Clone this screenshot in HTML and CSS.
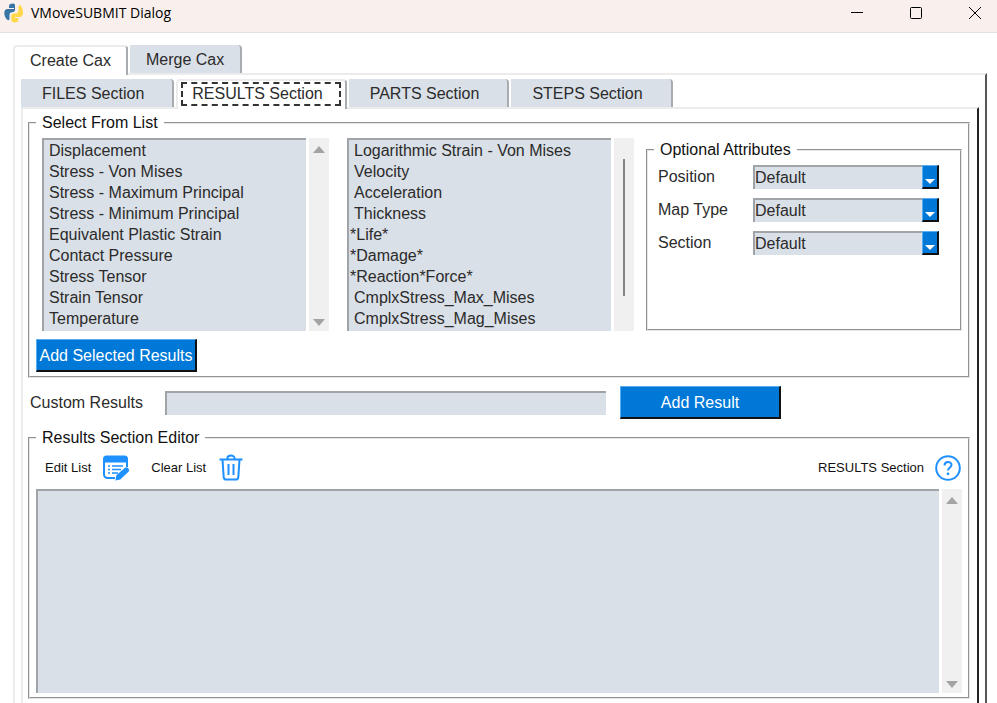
FILE: index.html
```html
<!DOCTYPE html>
<html lang="en">
<head>
<meta charset="utf-8">
<title>VMoveSUBMIT Dialog</title>
<link rel="stylesheet" href="styles.css">
</head>
<body>
<header class="titlebar">
  <svg class="logo" width="20" height="20" viewBox="0 0 20 20" aria-hidden="true">
    <path fill="#3874a6" d="M9 .5C6 .5 5 1.500 5 3.300V5h5v1H3.500C1.300 6 .3 7.800.3 10s1 5 2.700 6.500q2 1.500 2.500-.5V12c0-1.800 1-2.800 2.500-2.800q3 0 3-2.400V3.300C11 1.500 11 .5 9 .5z"/>
    <path fill="#ffd84a" d="M14.500 2.500v4.700c0 1.900-1.300 3.200-3 3.200H9.700c-1.500 0-2.400 1-2.400 2.400v3.700c0 1.900 1.200 3 3.400 3s3.700-1 3.700-2.900V15h-3.500v-1h4.800c2.300 0 3.300-1.800 3.300-4.500s-1-6-2.500-7q-1.500-1-2 0z"/>
  </svg>
  <h1 class="title">VMoveSUBMIT Dialog</h1>
  <div class="window-buttons">
    <button type="button" aria-label="Minimize"><svg width="12" height="12" viewBox="0 0 12 12"><path d="M0 5.500h12"/></svg></button>
    <button type="button" aria-label="Maximize"><svg width="12" height="12" viewBox="0 0 12 12"><rect x=".5" y=".5" width="11" height="11" rx="1"/></svg></button>
    <button type="button" aria-label="Close"><svg width="12" height="12" viewBox="0 0 12 12"><path d="M0 0l12 12M12 0L0 12"/></svg></button>
  </div>
</header>

<main class="notebook outer">
  <div class="tabs" role="tablist">
    <button class="tab active" type="button" role="tab" aria-selected="true">Create Cax</button>
    <button class="tab" type="button" role="tab" aria-selected="false">Merge Cax</button>
  </div>
  <div class="panel">
    <div class="notebook inner">
      <div class="tabs" role="tablist">
        <button class="tab" type="button" role="tab" aria-selected="false">FILES Section</button>
        <button class="tab active" type="button" role="tab" aria-selected="true"><span class="focus">RESULTS Section</span></button>
        <button class="tab" type="button" role="tab" aria-selected="false">PARTS Section</button>
        <button class="tab" type="button" role="tab" aria-selected="false">STEPS Section</button>
      </div>
      <form class="panel">
        <fieldset class="group">
          <legend>Select From List</legend>
          <div class="lists">
            <div class="scroll-area first">
              <select class="listbox" multiple size="9" aria-label="Standard results">
                <option>Displacement</option>
                <option>Stress - Von Mises</option>
                <option>Stress - Maximum Principal</option>
                <option>Stress - Minimum Principal</option>
                <option>Equivalent Plastic Strain</option>
                <option>Contact Pressure</option>
                <option>Stress Tensor</option>
                <option>Strain Tensor</option>
                <option>Temperature</option>
              </select>
              <div class="scrollbar"><span class="arrow up"></span><span class="arrow down"></span></div>
            </div>
            <div class="scroll-area">
              <select class="listbox" multiple size="9" aria-label="Other results">
                <option>Logarithmic Strain - Von Mises</option>
                <option>Velocity</option>
                <option>Acceleration</option>
                <option>Thickness</option>
                <option class="pattern">*Life*</option>
                <option class="pattern">*Damage*</option>
                <option class="pattern">*Reaction*Force*</option>
                <option>CmplxStress_Max_Mises</option>
                <option>CmplxStress_Mag_Mises</option>
              </select>
              <div class="scrollbar slim"><span class="thumb"></span></div>
            </div>
            <fieldset class="group attributes">
              <legend>Optional Attributes</legend>
              <div class="attribute-grid">
                <label for="position">Position</label>
                <div class="combo"><select id="position"><option>Default</option></select><span class="drop"></span></div>
                <label for="map-type">Map Type</label>
                <div class="combo"><select id="map-type"><option>Default</option></select><span class="drop"></span></div>
                <label for="section">Section</label>
                <div class="combo"><select id="section"><option>Default</option></select><span class="drop"></span></div>
              </div>
            </fieldset>
          </div>
          <button class="action" type="button">Add Selected Results</button>
        </fieldset>

        <div class="custom-row">
          <label for="custom">Custom Results</label>
          <input id="custom" type="text">
          <button class="action" type="button">Add Result</button>
        </div>

        <fieldset class="group editor">
          <legend>Results Section Editor</legend>
          <div class="editor-body">
            <div class="toolbar">
              <span id="edit-label">Edit List</span>
              <button class="icon" type="button" aria-labelledby="edit-label">
                <svg width="28" height="28" viewBox="0 0 28 28" fill="none" stroke="#1e90ff" stroke-width="2">
                  <path d="M2 8v12.500a3.500 3.500 0 0 0 3.500 3.500H13M25 8v5"/>
                  <path fill="#1e90ff" stroke="none" d="M1 8.500V5a3.500 3.500 0 0 1 3.500-3.500h18A3.500 3.500 0 0 1 26 5v3.500z"/>
                  <path stroke-width="1.500" d="M6 12h2M10 12h11M6 15.500h2M10 15.500h9M6 19h2M10 19h6"/>
                  <path fill="#1e90ff" stroke="none" d="M13.500 26.500l.8-5.300 8.700-7.400q1.500-1.200 2.900.2l.8.9q1.200 1.500-.2 2.800l-8.200 7.700z"/>
                </svg>
              </button>
              <span id="clear-label">Clear List</span>
              <button class="icon" type="button" aria-labelledby="clear-label">
                <svg width="28" height="28" viewBox="-2 0 28 28" fill="none" stroke="#1e90ff" stroke-width="2">
                  <path d="M.5 5.500h23M8.500 5.500V4a3.500 2.500 0 0 1 7 0v1.500M3.500 5.500l1.200 17.800a2.500 2.500 0 0 0 2.500 2.200h9.600a2.500 2.500 0 0 0 2.500-2.200l1.200-17.800M9.500 10v11M14.500 10v11"/>
                </svg>
              </button>
              <span class="help-label" id="help-label">RESULTS Section</span>
              <button class="icon" type="button" aria-labelledby="help-label">
                <svg width="26" height="26" viewBox="0 0 26 26" fill="none" stroke="#1e90ff" stroke-width="2">
                  <circle cx="13" cy="13" r="11.800"/>
                  <path d="M9.500 10.500c0-4.500 7-4.500 7-.5 0 2.500-3.500 2.600-3.500 5.500"/>
                  <circle cx="13" cy="18.800" r="1.400" fill="#1e90ff" stroke="none"/>
                </svg>
              </button>
            </div>
            <div class="scroll-area grow">
              <textarea aria-label="Results section text"></textarea>
              <div class="scrollbar"><span class="arrow up"></span><span class="arrow down"></span></div>
            </div>
          </div>
        </fieldset>
      </form>
    </div>
  </div>
</main>
</body>
</html>
```
FILE: styles.css
```css
* { box-sizing: border-box; }

body {
  margin: 0;
  height: 100vh;
  display: flex;
  flex-direction: column;
  overflow: hidden;
  background: #fff;
  color: #2b2b2b;
  font: 16px/20px "Liberation Sans", Arial, sans-serif;
}

button, input, select, textarea {
  font: inherit;
  color: inherit;
  margin: 0;
  padding: 0;
  border: 0;
  border-radius: 0;
  outline: 0;
}

/* Window title bar */
.titlebar {
  display: flex;
  align-items: center;
  height: 33px;
  padding: 0 10px 7px 4px;
  background: #f9f0ed;
  border-bottom: 1px solid #e2e2e2;
}
.title {
  margin: 0 0 0 7px;
  color: #000;
  font: 14px/20px "Open Sans", "Noto Sans", sans-serif;
}
.window-buttons { display: flex; gap: 35px; margin-left: auto; }
.window-buttons button {
  display: grid;
  place-items: center;
  width: 24px;
  height: 24px;
  background: none;
}
.window-buttons svg { fill: none; stroke: #000; overflow: visible; }

/* Notebooks */
.notebook { display: flex; flex-direction: column; flex: 1; min-height: 0; }
.outer { margin: 12px 10px 0 13px; }
.panel {
  display: flex;
  flex-direction: column;
  flex: 1;
  min-height: 0;
  border-top: 2px solid #ececec;
  border-left: 2px solid #ececec;
  border-right: 2px solid #555;
}
.outer > .panel { padding: 4px 6px 0; }
.inner > .panel { padding: 4px 7px 4px 5px; border-right-color: #222; }

.tabs { display: flex; align-items: flex-end; gap: 2px; }
.tab {
  height: 28px;
  padding: 2px 28px 0 21px;
  background: #dae0e7;
  border-right: 2px solid #a8abaf;
  border-radius: 0 4px 0 0;
}
.tab.active {
  position: relative;
  height: 30px;
  margin-bottom: -2px;
  background: #fff;
  border-top: 2px solid #ececec;
  border-left: 2px solid #ececec;
  border-radius: 4px 4px 0 0;
}
.outer > .tabs .tab { padding: 2px 16px 0; }
.outer > .tabs .tab.active { padding: 0 15px; }
.inner > .tabs .tab.active { padding: 0 4px 2px 3px; }
.focus {
  display: block;
  padding: 0 16px 0 9px;
  border: 2px dashed #333;
}

/* Titled frames */
.group {
  min-width: 0;
  margin: 0;
  padding: 5px 6px 4px;
  border: 2px groove #e6e6e6;
}
.group > legend { margin-left: 0; padding: 0 6px; color: #111; }
.attributes > legend { line-height: 18px; }

.lists {
  display: grid;
  grid-template-columns: 293fr 287fr 316fr;
  column-gap: 12px;
  margin: 0 0 8px 6px;
}
.scroll-area { display: flex; gap: 3px; min-width: 0; }
.first { margin-right: 6px; }
.listbox {
  flex: 1;
  min-width: 0;
  height: 193px;
  padding-top: 2px;
  overflow: hidden;
  background: #dae0e7;
  border-top: 2px solid #a0a4a8;
  border-left: 2px solid #a0a4a8;
}
.listbox option {
  min-height: 21px;
  padding: 0 5px;
  line-height: 21px;
}
.listbox .pattern { padding-left: 1px; }

.scrollbar {
  display: flex;
  flex-direction: column;
  justify-content: space-between;
  align-items: center;
  width: 20px;
  padding: 8px 0 5px;
  background: #f0f0f0;
}
.arrow { border: 6px solid transparent; }
.arrow.up { border-top: 0; border-bottom: 7px solid #a3a3a3; }
.arrow.down { border-bottom: 0; border-top: 7px solid #a3a3a3; }
.slim { padding: 21px 0 35px; }
.thumb { flex: 1; width: 2px; background: #858585; }

.attributes { margin-top: 3px; padding: 6px 21px 8px 10px; }
.attributes > legend { margin-left: -4px; }
.attribute-grid {
  display: grid;
  grid-template-columns: 86px 1fr;
  align-items: center;
  gap: 9px;
}
.combo { display: flex; height: 24px; }
.combo select {
  flex: 1;
  min-width: 0;
  appearance: none;
  background: #dae0e7;
  border-top: 2px solid #a0a4a8;
  border-left: 2px solid #a0a4a8;
}
.drop {
  display: flex;
  justify-content: center;
  align-items: flex-end;
  width: 17px;
  padding-bottom: 3px;
  background: #0078d7;
  border: 1px solid #5aacf0;
  border-right: 2px solid #111;
  border-bottom: 2px solid #111;
}
.drop::before {
  content: "";
  border: 5px solid transparent;
  border-top-color: #fff;
  border-bottom: 0;
}

.action {
  display: block;
  width: 161px;
  height: 33px;
  padding-top: 2px;
  white-space: nowrap;
  color: #fff;
  background: #0078d7;
  border: 1px solid #5aacf0;
  border-right: 2px solid #111;
  border-bottom: 2px solid #111;
}

.custom-row {
  display: flex;
  align-items: center;
  margin: 8px 189px 9px 2px;
}
.custom-row label { width: 135px; }
.custom-row input {
  flex: 1;
  min-width: 0;
  height: 24px;
  margin-right: 14px;
  background: #dae0e7;
  border-top: 2px solid #a0a4a8;
  border-left: 2px solid #a0a4a8;
}

/* Editor */
.editor { flex: 1; min-height: 0; }
.editor-body { display: flex; flex-direction: column; height: 100%; }
.toolbar {
  display: flex;
  align-items: center;
  height: 30px;
  margin: 0 1px 6px 9px;
  font-size: 13px;
  color: #111;
}
.icon { display: block; background: none; margin: 0 21px 0 11px; }
.icon svg { display: block; }
.help-label { margin-left: auto; }
.help-label + .icon { margin-right: 0; }
.grow { flex: 1; min-height: 0; }
textarea {
  flex: 1;
  min-width: 0;
  resize: none;
  background: #dae0e7;
  border-top: 2px solid #a0a4a8;
  border-left: 2px solid #a0a4a8;
}
```
